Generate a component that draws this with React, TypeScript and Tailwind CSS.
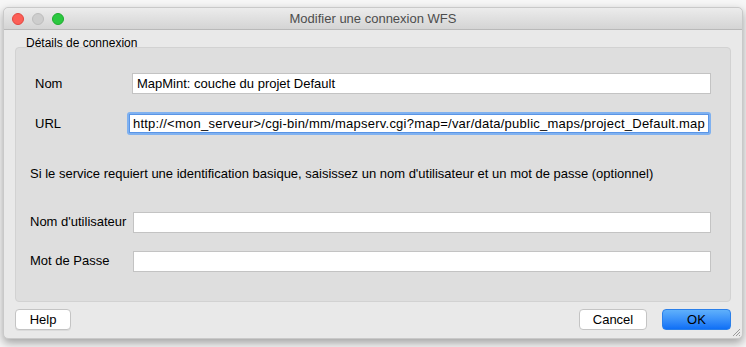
import type { FC } from "react";

interface FieldProps {
  label: string;
  value?: string;
  focused?: boolean;
  labelClass: string;
}

const Field: FC<FieldProps> = ({ label, value, focused, labelClass }) => {
  return (
    <div className="flex items-center">
      <span className={labelClass}>{label}</span>
      {focused ? (
        <div className="flex-1 rounded-[3px] p-[2px] bg-[#7fb1f0]">
          <div className="h-[19px] bg-white border border-[#5a95e6] px-[3px] flex items-center text-[13px] tracking-[0.24px] text-black whitespace-nowrap overflow-hidden">
            {value}
          </div>
        </div>
      ) : (
        <div className="flex-1 h-[21px] bg-white border border-[#c3c3c3] px-[4px] flex items-center text-[13px] text-black whitespace-nowrap overflow-hidden">
          {value}
        </div>
      )}
    </div>
  );
};

const Light: FC<{ color: string }> = ({ color }) => (
  <span className={`block w-[12px] h-[12px] rounded-full ${color}`} />
);

const App: FC = () => {
  return (
    <div className="w-[746px] h-[347px] bg-[#f6f6f6] font-['Liberation_Sans',Arial,sans-serif] text-black pt-[7px] pl-[3px]">
      <div className="relative w-[740px] h-[332px] bg-[#e9e9e9] rounded-[5px] shadow-[0_4px_10px_rgba(0,0,0,0.35)] border border-[#c9c9c9] flex flex-col">
        {/* title bar */}
        <div className="h-[22px] rounded-t-[5px] bg-gradient-to-b from-[#ececec] to-[#d4d4d4] border-b border-[#b9b9b9] flex items-center relative">
          <div className="flex items-center gap-[8px] pl-[8px]">
            <Light color="bg-[#fc5f57] border border-[#e2463f]" />
            <Light color="bg-[#cdcdcd] border border-[#bdbdbd]" />
            <Light color="bg-[#2bc840] border border-[#1eab2e]" />
          </div>
          <div className="absolute inset-0 flex items-center justify-center text-[13px] text-[#4d4d4d]">
            Modifier une connexion WFS
          </div>
        </div>

        {/* body */}
        <div className="flex-1 flex flex-col px-[11px] pt-[17px]">
          <div className="relative h-[255px] bg-[#dedede] border border-[#d2d2d2] rounded-[4px] flex flex-col">
            <span className="absolute left-[9px] top-[-12px] text-[12px] leading-[14px] text-black px-[1px]">
              Détails de connexion
            </span>
            <div className="pt-[25px] pl-[19px] pr-[19px] flex flex-col">
              <Field
                label="Nom"
                value="MapMint: couche du projet Default"
                labelClass="w-[97px] text-[13px]"
              />
              <div className="h-[18px]" />
              <Field
                label="URL"
                value="http://<mon_serveur>/cgi-bin/mm/mapserv.cgi?map=/var/data/public_maps/project_Default.map"
                focused
                labelClass="w-[94px] text-[13px]"
              />
            </div>
            <p className="pl-[14px] mt-[29px] text-[13px]">
              Si le service requiert une identification basique, saisissez un nom d'utilisateur et un mot de passe (optionnel)
            </p>
            <div className="pt-[28px] pl-[14px] pr-[19px] flex flex-col gap-[18px]">
              <Field label="Nom d'utilisateur" labelClass="w-[103px] text-[13px]" />
              <Field label="Mot de Passe" labelClass="w-[103px] text-[13px]" />
            </div>
          </div>

          {/* buttons */}
          <div className="flex items-center mt-[7px]">
            <button
              type="button"
              className="w-[56px] h-[21px] bg-white border border-[#c4c4c4] rounded-[4px] text-[13px] leading-none shadow-[0_1px_0_rgba(0,0,0,0.06)]"
            >
              Help
            </button>
            <div className="flex-1" />
            <button
              type="button"
              className="w-[68px] h-[21px] bg-white border border-[#c4c4c4] rounded-[4px] text-[13px] leading-none mr-[15px]"
            >
              Cancel
            </button>
            <button
              type="button"
              className="w-[69px] h-[21px] bg-gradient-to-b from-[#5fb0fb] to-[#0d6ff6] border border-[#2a7fe9] rounded-[4px] text-[13px] leading-none"
            >
              OK
            </button>
          </div>
        </div>

        {/* resize grip */}
        <svg
          className="absolute right-[1px] bottom-[1px]"
          width="10"
          height="10"
          viewBox="0 0 10 10"
        >
          <path d="M9 2 L2 9 M9 5 L5 9 M9 8 L8 9" stroke="#9a9a9a" strokeWidth="1" />
        </svg>
      </div>
    </div>
  );
};

export default App;
